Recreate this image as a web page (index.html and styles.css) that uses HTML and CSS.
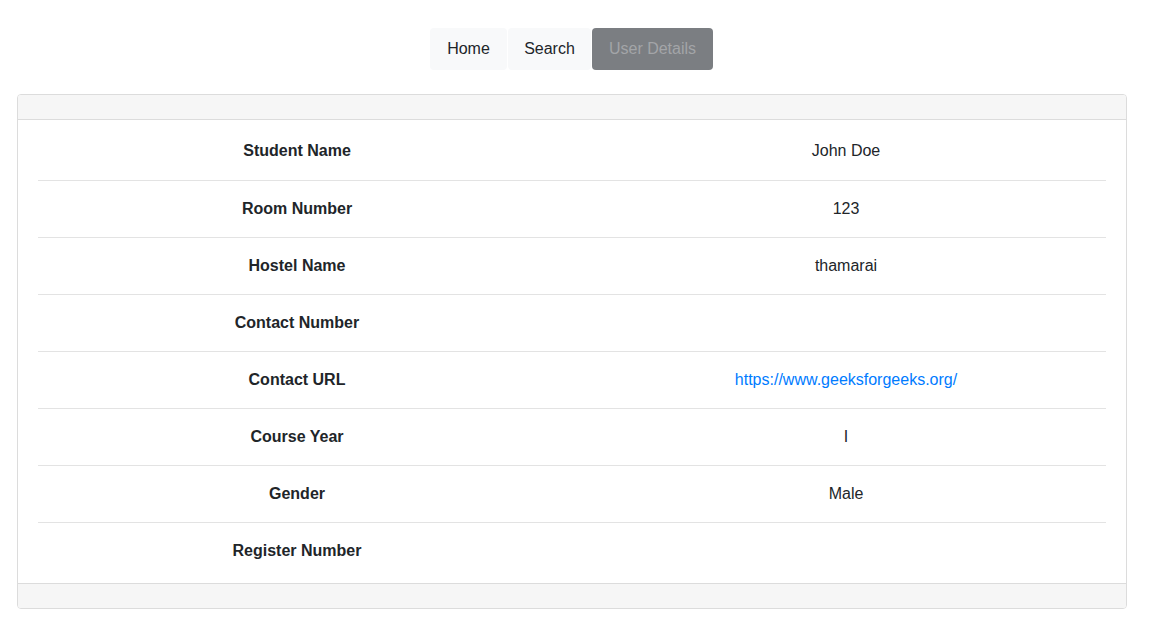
FILE: index.html
```html
<!DOCTYPE html>
<html>
<head>
<meta charset="utf-8">
<link rel="stylesheet" href="styles.css">
</head>
<body>
<nav class="nav">
  <a class="btn btn-light">Home</a>
  <a class="btn btn-light">Search</a>
  <a class="btn btn-active">User Details</a>
</nav>
<div class="card">
  <div class="card-header"></div>
  <div class="card-body">
    <table class="details">
      <tr><th>Student Name</th><td>John Doe</td></tr>
      <tr><th>Room Number</th><td>123</td></tr>
      <tr><th>Hostel Name</th><td>thamarai</td></tr>
      <tr><th>Contact Number</th><td></td></tr>
      <tr><th>Contact URL</th><td><a class="link" href="#">https://www.geeksforgeeks.org/</a></td></tr>
      <tr><th>Course Year</th><td>I</td></tr>
      <tr><th>Gender</th><td>Male</td></tr>
      <tr><th>Register Number</th><td></td></tr>
    </table>
  </div>
  <div class="card-footer"></div>
</div>
</body>
</html>
```
FILE: styles.css
```css
* { box-sizing: border-box; }
body {
  margin: 0;
  padding: 28px 17px 0 17px;
  font-family: "Liberation Sans", Arial, sans-serif;
  font-size: 16px;
  color: #212529;
  background: #fff;
}
.nav {
  display: flex;
  justify-content: flex-start;
  gap: 1px;
  padding-left: 413px;
  margin-bottom: 24px;
}
.btn {
  display: inline-block;
  height: 42px;
  line-height: 24px;
  padding: 9px 16px;
  border-radius: 4px;
  font-size: 16px;
  text-decoration: none;
  white-space: nowrap;
  text-align: center;
  cursor: pointer;
}
.btn-light { background: #f8f9fa; color: #212529; }
.btn-light:first-child { width: 77px; }
.btn-light:nth-child(2) { width: 83px; }
.btn-active { background: #7b7e82; color: #a3a5a8; width: 121px; }
.card {
  width: 1110px;
  border: 1px solid #dcdcdc;
  border-radius: 4px;
  overflow: hidden;
}
.card-header {
  height: 25px;
  background: #f6f6f6;
  border-bottom: 1px solid #dcdcdc;
}
.card-footer {
  height: 25px;
  background: #f6f6f6;
  border-top: 1px solid #dcdcdc;
}
.card-body {
  padding: 3px 20px 4px 20px;
}
.details {
  width: 100%;
  border-collapse: collapse;
}
.details tr { height: 57px; }
.details tr + tr { border-top: 1px solid #e3e3e3; }
.details th {
  width: 518px;
  font-weight: bold;
  text-align: center;
  vertical-align: middle;
  padding: 0;
}
.details td {
  text-align: center;
  vertical-align: middle;
  padding: 0 0 0 30px;
}
.link { color: #007bff; text-decoration: none; }
```
